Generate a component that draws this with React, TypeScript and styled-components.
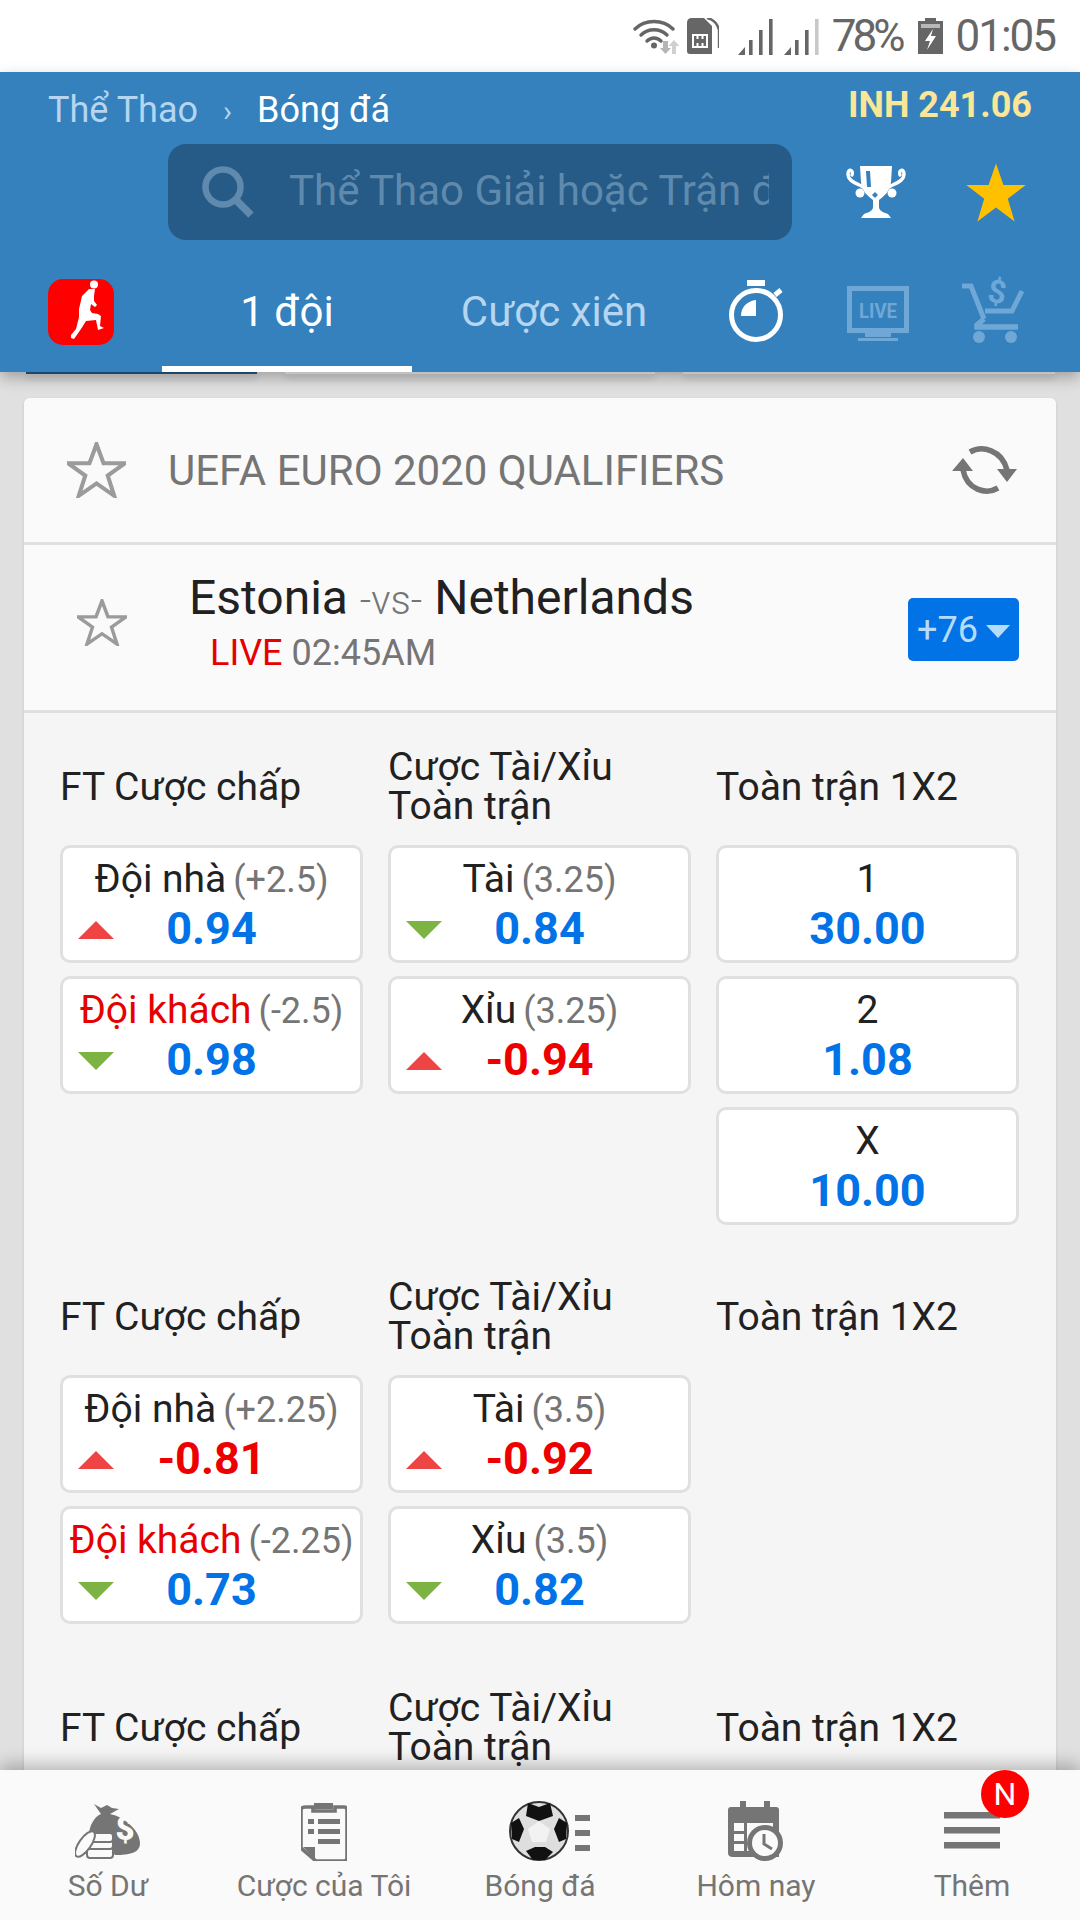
import * as React from "react";
import styled, { createGlobalStyle } from "styled-components";

const GlobalStyles = createGlobalStyle`
  html, body {
    margin: 0;
    padding: 0;
    background: #e0e0e0;
    font-family: Roboto, "Noto Sans", sans-serif;
  }
`;

const Screen = styled.div`
  width: 1080px;
  height: 1920px;
  display: flex;
  flex-direction: column;
  overflow: hidden;
  background: #e0e0e0;
`;

/* status bar */
const StatusBar = styled.div`
  height: 72px;
  flex: none;
  background: #fff;
  display: flex;
  align-items: center;
  justify-content: flex-end;
  padding: 0 25px 0 0;
  color: #666;
  font-size: 44px;
  letter-spacing: -2px;
`;

const StatusIcon = styled.svg<{ $gap?: number }>`
  display: block;
  flex: none;
  margin-right: ${(p) => p.$gap ?? 0}px;
`;

const StatusText = styled.span<{ $gap?: number; $tight?: boolean }>`
  margin-right: ${(p) => p.$gap ?? 0}px;
  line-height: 72px;
  letter-spacing: ${(p) => (p.$tight ? "-4px" : "-2px")};
`;

/* blue header */
const Header = styled.header`
  position: relative;
  z-index: 2;
  flex: none;
  height: 300px;
  background: #3481bd;
  box-shadow: 0 6px 14px rgba(0, 0, 0, 0.28);
`;

const TopRow = styled.div`
  height: 72px;
  display: flex;
  justify-content: space-between;
  padding: 0 48px;
`;

const Crumbs = styled.div`
  display: flex;
  align-items: center;
  font-size: 36px;
  color: #b5d5f0;
  height: 72px;
  padding-top: 4px;
  box-sizing: border-box;
`;

const CrumbSep = styled.span`
  margin: 0 25px;
  font-size: 30px;
`;

const CrumbNow = styled.span`
  color: #fff;
`;

const Balance = styled.div`
  font-size: 36px;
  font-weight: 700;
  color: #fbe596;
  line-height: 66px;
`;

const SearchRow = styled.div`
  display: flex;
  align-items: center;
  height: 96px;
  padding-left: 168px;
`;

const SearchBox = styled.div`
  width: 624px;
  height: 96px;
  box-sizing: border-box;
  background: #255b86;
  border-radius: 18px;
  display: flex;
  align-items: center;
  padding: 0 23px 0 33px;
`;

const Placeholder = styled.div`
  margin-left: 34px;
  flex: 1;
  min-width: 0;
  overflow: hidden;
  white-space: nowrap;
  font-size: 42px;
  line-height: 60px;
  margin-top: -3px;
  color: #5f8aad;
`;

const TopIcon = styled.svg<{ $left: number }>`
  display: block;
  flex: none;
  margin-left: ${(p) => p.$left}px;
`;

const TabRow = styled.div`
  display: flex;
  height: 100px;
  margin-top: 32px;
  align-items: flex-start;
`;

const SportBadge = styled.div`
  flex: none;
  width: 66px;
  height: 66px;
  margin: 7px 48px 0 48px;
  border-radius: 15px;
  background: #f00;
  display: flex;
  align-items: center;
  justify-content: center;
`;

const Tab = styled.div<{ $active?: boolean; $width: number }>`
  flex: none;
  box-sizing: border-box;
  width: ${(p) => p.$width}px;
  height: 100px;
  padding-bottom: 15px;
  display: flex;
  align-items: center;
  justify-content: center;
  font-size: 42px;
  color: ${(p) => (p.$active ? "#fff" : "#b5d5f0")};
  border-bottom: 6px solid ${(p) => (p.$active ? "#fff" : "transparent")};
`;

const TabIcon = styled.svg<{ $left: number; $top: number }>`
  display: block;
  flex: none;
  overflow: visible;
  margin: ${(p) => p.$top}px 0 0 ${(p) => p.$left}px;
`;

/* scrolling content */
const Content = styled.main`
  flex: 1;
  min-height: 0;
  overflow: hidden;
`;

const PeekRow = styled.div`
  display: flex;
  height: 2px;
  padding: 0 24px;
  margin-bottom: 24px;
`;

const Peek = styled.div<{ $color: string; $left: number; $width: number }>`
  flex: none;
  width: ${(p) => p.$width}px;
  margin-left: ${(p) => p.$left}px;
  background: ${(p) => p.$color};
  box-shadow: 0 4px 6px rgba(0, 0, 0, 0.2);
`;

const Card = styled.section`
  margin: 0 24px;
  border-radius: 6px 6px 0 0;
  background: #f5f5f5;
  box-shadow: 0 1px 3px rgba(0, 0, 0, 0.12);
`;

const LeagueRow = styled.div`
  height: 147px;
  box-sizing: border-box;
  background: #fafafa;
  border-radius: 6px 6px 0 0;
  border-bottom: 3px solid #e0e0e0;
  display: flex;
  align-items: center;
  padding: 0 38px 0 43px;
`;

const LeagueName = styled.div`
  flex: 1;
  margin-left: 42px;
  font-size: 42px;
  color: #757575;
`;

const MatchRow = styled.div`
  height: 168px;
  box-sizing: border-box;
  background: #fafafa;
  border-bottom: 3px solid #e0e0e0;
  display: flex;
  align-items: center;
  padding: 0 37px 0 53px;
`;

const MatchInfo = styled.div`
  flex: 1;
  margin-left: 62px;
  margin-top: -10px;
`;

const Teams = styled.div`
  font-size: 48px;
  line-height: 58px;
  color: #212121;
`;

const Versus = styled.span`
  font-size: 40px;
  font-weight: 300;
  color: #757575;
`;

const Kickoff = styled.div`
  margin-left: 21px;
  font-size: 36px;
  line-height: 46px;
  color: #757575;
`;

const LiveTag = styled.span`
  color: #e60000;
`;

const MoreButton = styled.div`
  width: 111px;
  height: 63px;
  margin-top: 4px;
  border-radius: 5px;
  background: #0273e6;
  color: #b5dcfb;
  font-size: 36px;
  display: flex;
  align-items: center;
  justify-content: center;
  gap: 8px;
`;

const Caret = styled.span`
  width: 0;
  height: 0;
  border-left: 12px solid transparent;
  border-right: 12px solid transparent;
  border-top: 13px solid #b5dcfb;
  margin-top: 3px;
`;

const Market = styled.div<{ $top: number }>`
  display: grid;
  grid-template-columns: repeat(3, 303px);
  column-gap: 25px;
  padding: ${(p) => p.$top}px 36px 0;
`;

const Column = styled.div`
  display: flex;
  flex-direction: column;
  gap: 13px;
`;

const ColumnTitle = styled.div`
  height: 78px;
  margin-top: 1px;
  margin-bottom: 6px;
  font-size: 39px;
  line-height: 39px;
  white-space: nowrap;
  color: #212121;
  display: flex;
  align-items: center;
`;

const OddsCell = styled.div`
  position: relative;
  height: 118px;
  box-sizing: border-box;
  background: #fff;
  border: 3px solid #e0e0e0;
  border-radius: 10px;
  text-align: center;
  white-space: nowrap;
`;

const OddsLabel = styled.div<{ $red?: boolean }>`
  margin-top: 6px;
  height: 50px;
  line-height: 50px;
  font-size: 39px;
  color: ${(p) => (p.$red ? "#e60000" : "#212121")};
`;

const Handicap = styled.span`
  margin-left: 7px;
  font-size: 36px;
  color: #757575;
`;

const OddsValue = styled.div<{ $red?: boolean }>`
  height: 50px;
  line-height: 50px;
  font-size: 45px;
  font-weight: 700;
  color: ${(p) => (p.$red ? "#ee0000" : "#0273e6")};
`;

const Arrow = styled.span<{ $up: boolean }>`
  position: absolute;
  left: 15px;
  top: 73px;
  width: 0;
  height: 0;
  border-left: 18px solid transparent;
  border-right: 18px solid transparent;
  ${(p) =>
    p.$up
      ? "border-bottom: 18px solid #ef4444;"
      : "border-top: 18px solid #7cb342;"}
`;

/* bottom navigation */
const BottomNav = styled.nav`
  position: relative;
  z-index: 2;
  flex: none;
  height: 150px;
  display: grid;
  grid-template-columns: repeat(5, 216px);
  background: #fafafa;
  box-shadow: 0 -6px 16px rgba(0, 0, 0, 0.25);
`;

const NavItem = styled.div`
  position: relative;
  display: flex;
  flex-direction: column;
  align-items: center;
  padding-top: 30px;
  font-size: 30px;
  color: #757575;
`;

const NavIcon = styled.div<{ $shift?: number }>`
  height: 62px;
  display: flex;
  align-items: center;
  justify-content: center;
  padding-left: ${(p) => p.$shift ?? 0}px;
`;

const NavLabel = styled.div`
  margin-top: 4px;
  line-height: 40px;
  white-space: nowrap;
`;

const NewBadge = styled.div`
  position: absolute;
  left: 117px;
  top: 0;
  width: 48px;
  height: 48px;
  border-radius: 50%;
  background: #f00;
  color: #fff;
  font-size: 32px;
  line-height: 48px;
  text-align: center;
`;

const StarSvg = styled.svg<{ $lift?: number }>`
  display: block;
  flex: none;
  margin-bottom: ${(p) => p.$lift ?? 0}px;
`;

const STAR = "M50 4 L62 38 L98 38 L69 60 L80 96 L50 74 L20 96 L31 60 L2 38 L38 38 Z";

const WifiIcon = () => (
  <StatusIcon $gap={4} width="50" height="36" viewBox="0 0 50 36">
    <g fill="none" stroke="#666" strokeWidth="3.4" strokeLinecap="round">
      <path d="M2 11 C12 1 30 1 40 11" />
      <path d="M8 17 C15 10 27 10 34 17" />
      <path d="M14 23 C18 19 24 19 28 23" />
    </g>
    <circle cx="21" cy="27.5" r="3" fill="#666" />
    <path d="M30 23 h5 v7 h3 l-5.5 6 l-5.5 -6 h3 Z" fill="#b5b5b5" />
    <path d="M43 36 h-4 v-8 h-3.5 l5.5 -6 l5.5 6 h-3.5 Z" fill="#d0d0d0" />
  </StatusIcon>
);

const SimIcon = () => (
  <StatusIcon $gap={19} width="32" height="36" viewBox="0 0 32 36">
    <path d="M5 0 H17 L25 8 V36 H3 Q0 36 0 33 V5 Q0 0 5 0 Z" fill="#666" />
    <path d="M20 0 C26 1 31 6 32 12 V30" fill="none" stroke="#666" strokeWidth="2.4" />
    <rect x="6" y="17" width="14" height="12" fill="none" stroke="#fff" strokeWidth="2" />
    <path d="M10.5 17 v4 M15.5 17 v4 M10.5 29 v-4 M15.5 29 v-4" stroke="#fff" strokeWidth="2" />
  </StatusIcon>
);

const SignalIcon = ({ gap, last }: { gap: number; last: string }) => (
  <StatusIcon $gap={gap} width="36" height="37" viewBox="0 0 36 37">
    <path d="M0 37 L7 29 V37 Z" fill="#666" />
    <rect x="11" y="22" width="3.6" height="15" fill="#666" />
    <rect x="21" y="12" width="3.6" height="25" fill="#666" />
    <rect x="31" y="1" width="3.6" height="36" fill={last} />
  </StatusIcon>
);

const BatteryIcon = () => (
  <StatusIcon $gap={12} width="25" height="36" viewBox="0 0 25 36">
    <path d="M7 0 H18 V3 H25 V36 H0 V3 H7 Z" fill="#666" />
    <rect x="3" y="6" width="19" height="4" fill="#b8b8b8" />
    <path d="M15 11 L7 23 H12 L9 32 L18 18 H13 Z" fill="#fff" />
  </StatusIcon>
);

const SearchIcon = () => (
  <svg width="54" height="54" viewBox="0 0 54 54" style={{ flex: "none" }}>
    <circle cx="22" cy="22" r="17.5" fill="none" stroke="#5f8aad" strokeWidth="6.5" />
    <path d="M34 34 L50 50" stroke="#5f8aad" strokeWidth="7.5" />
  </svg>
);

const TrophyIcon = () => (
  <TopIcon $left={54} width="60" height="52" viewBox="0 0 60 52">
    <g fill="none" stroke="#fff" strokeWidth="3.4" strokeLinecap="round">
      <path d="M6 9 C8 4 2 2 2 8 C2 15 10 17 17 21" />
      <path d="M54 9 C52 4 58 2 58 8 C58 15 50 17 43 21" />
    </g>
    <circle cx="14" cy="27" r="4.5" fill="#fff" />
    <circle cx="46" cy="27" r="4.5" fill="#fff" />
    <path d="M14 0 H46 L45 16 C44 26 37 31 33 34 V41 C33 45 39 47 42 48 L45 52 H15 L18 48 C21 47 27 45 27 41 V34 C23 31 16 26 15 16 Z" fill="#fff" />
    <path d="M20 5 H24 L25 21 H21 Z" fill="#3481bd" />
    <path d="M26 29 L29 26 L32 29 L29 32 Z" fill="#3481bd" />
  </TopIcon>
);

const GoldStar = () => (
  <TopIcon $left={59} width="62" height="63" viewBox="0 0 100 100" preserveAspectRatio="none">
    <path d={STAR} fill="#ffc000" />
  </TopIcon>
);

const RunnerIcon = () => (
  <svg width="66" height="66" viewBox="0 0 66 66">
    <circle cx="46" cy="5.5" r="4" fill="#fff" />
    <path d="M41 10 L47 10 L46 17 L46 22 L49 26 L47 28 L43 25 L42 31 L44 34 L50 35 L53 37 L52 47 L56 49 L50 51 L48 41 L38 42 L33 50 L26 60 L23 59 L23 56 L28 50 L31 38 L31 30 L34 17 Z" fill="#fff" />
  </svg>
);

const StopwatchIcon = () => (
  <TabIcon $left={33} $top={8} width="56" height="63" viewBox="0 0 56 63">
    <rect x="18" y="0" width="18" height="6" fill="#fff" />
    <circle cx="27" cy="35" r="24.5" fill="none" stroke="#fff" strokeWidth="5" />
    <path d="M46 15 L52 10" stroke="#fff" strokeWidth="5" />
    <path d="M27 20 V36 H12 C12 27 18 21 27 20 Z" fill="#fff" />
  </TabIcon>
);

const LiveIcon = () => (
  <TabIcon $left={62} $top={14} width="62" height="56" viewBox="0 0 62 56">
    <rect x="2.5" y="2.5" width="57" height="42" fill="none" stroke="#6fa8d6" strokeWidth="5" />
    <text x="31" y="32" textAnchor="middle" fontFamily="Roboto, sans-serif" fontWeight="700" fontSize="20" textLength="38" lengthAdjust="spacingAndGlyphs" fill="#6fa8d6">LIVE</text>
    <rect x="18" y="46" width="26" height="5" fill="#6fa8d6" />
    <rect x="11" y="52" width="40" height="3" fill="#6fa8d6" />
  </TabIcon>
);

const CartIcon = () => (
  <TabIcon $left={53} $top={9} width="62" height="62" viewBox="0 0 62 62">
    <path d="M0 5 H9 L22 38 M60 10 L50 30 H23" fill="none" stroke="#6fa8d6" strokeWidth="5" />
    <path d="M22 38 L15 44 V46 H56" fill="none" stroke="#6fa8d6" strokeWidth="5.5" />
    <circle cx="17" cy="56" r="6" fill="#6fa8d6" />
    <circle cx="49" cy="56" r="6" fill="#6fa8d6" />
    <text x="35" y="22" textAnchor="middle" fontFamily="Roboto, sans-serif" fontWeight="700" fontSize="32" fill="#6fa8d6" transform="rotate(8 35 12)">$</text>
  </TabIcon>
);

const OutlineStar = ({ size, lift }: { size: [number, number]; lift?: number }) => (
  <StarSvg $lift={lift} width={size[0]} height={size[1]} viewBox="0 0 100 100" preserveAspectRatio="none">
    <path d={STAR} fill="none" stroke="#9b9b9b" strokeWidth="7" />
  </StarSvg>
);

const RefreshIcon = () => (
  <svg width="66" height="48" viewBox="0 0 66 48" style={{ flex: "none" }}>
    <g fill="none" stroke="#757575" strokeWidth="5.5">
      <path d="M18 6 C30 -1 50 4 55 24" />
      <path d="M46 42 C34 49 15 44 11 24" />
    </g>
    <path d="M45 23 H65 L55 36 Z" fill="#757575" />
    <path d="M0 25 H21 L11 12 Z" fill="#757575" />
  </svg>
);

const MoneyBagIcon = () => (
  <svg width="66" height="56" viewBox="0 0 66 56">
    <path d="M19 1 L26 5 L32 2 L37 5 L44 6 L35 11 C50 14 65 28 65 40 C65 50 55 52 40 52 L14 30 C15 22 19 14 26 11 Z" fill="#757575" />
    <text x="50" y="37" textAnchor="middle" fontFamily="Roboto, sans-serif" fontWeight="900" fontSize="33" fill="#fafafa">$</text>
    <g fill="#fafafa" stroke="#757575" strokeWidth="2">
      <rect x="12" y="44" width="26" height="11" rx="3" />
      <rect x="12" y="36" width="26" height="10" rx="3" />
      <rect x="13" y="30" width="25" height="9" rx="3" />
      <ellipse cx="10" cy="41" rx="6" ry="15" transform="rotate(35 10 41)" />
    </g>
  </svg>
);

const ClipboardIcon = () => (
  <svg width="46" height="60" viewBox="0 0 46 60">
    <path d="M5 6 H12 V10 H34 V6 H43 Q46 6 46 9 V57 Q46 60 43 60 H15 L0 47 V9 Q0 6 5 6 Z" fill="none" stroke="#757575" strokeWidth="3.6" />
    <path d="M13 2 H32 V8 H13 Z" fill="#757575" />
    <path d="M2 46 L14 46 V58 Z" fill="#757575" />
    <g fill="#757575">
      <rect x="7" y="18" width="6" height="5" />
      <rect x="17" y="18" width="22" height="5" />
      <rect x="7" y="28" width="6" height="5" />
      <rect x="17" y="28" width="22" height="5" />
      <rect x="17" y="38" width="22" height="5" />
    </g>
  </svg>
);

const FootballIcon = () => (
  <svg width="82" height="60" viewBox="0 0 82 60">
    <circle cx="30" cy="30" r="29" fill="#dedede" stroke="#333" strokeWidth="2" />
    <path d="M30 20 L41 28 L37 41 L23 41 L19 28 Z" fill="#f2f2f2" />
    <g fill="#111">
      <path d="M19 2 L30 6 L41 2 L44 15 L30 20 L17 15 Z" />
      <path d="M2 22 L10 17 L15 28 L10 41 L3 38 Z" />
      <path d="M58 22 L50 17 L45 28 L50 41 L57 38 Z" />
      <path d="M17 50 L26 46 L36 46 L44 51 L36 59 L24 59 Z" />
    </g>
    <g fill="#757575">
      <rect x="66" y="14" width="15" height="6" />
      <rect x="66" y="29" width="15" height="6" />
      <rect x="66" y="44" width="15" height="6" />
    </g>
  </svg>
);

const CalendarIcon = () => (
  <svg width="56" height="60" viewBox="0 0 56 60">
    <path d="M12 0 H18 V6 H36 V0 H42 V6 H48 Q51 6 51 9 V56 H5 Q0 56 0 52 V9 Q0 6 3 6 H12 Z" fill="#757575" />
    <rect x="6" y="22" width="39" height="28" fill="#fafafa" />
    <g fill="#757575">
      <rect x="16" y="22" width="3" height="28" />
      <rect x="6" y="30" width="10" height="3" />
      <rect x="6" y="40" width="10" height="3" />
    </g>
    <circle cx="37" cy="42" r="18" fill="#757575" />
    <circle cx="37" cy="42" r="13" fill="#fafafa" />
    <path d="M36 33 V43 L44 48" fill="none" stroke="#757575" strokeWidth="3" />
  </svg>
);

const MenuIcon = () => (
  <svg width="56" height="40" viewBox="0 0 56 40">
    <rect width="56" height="6.5" y="1" fill="#757575" />
    <rect width="56" height="6.5" y="16" fill="#757575" />
    <rect width="56" height="6.5" y="31" fill="#757575" />
  </svg>
);

type Odds = {
  label?: string;
  line?: string;
  value: string;
  trend?: "up" | "down";
  redLabel?: boolean;
  redValue?: boolean;
};

type MarketData = {
  top: number;
  handicap: Odds[];
  totals: Odds[];
  oneXTwo: Odds[];
};

const markets: MarketData[] = [
  {
    top: 34,
    handicap: [
      { label: "Đội nhà", line: "(+2.5)", value: "0.94", trend: "up" },
      { label: "Đội khách", line: "(-2.5)", value: "0.98", trend: "down", redLabel: true },
    ],
    totals: [
      { label: "Tài", line: "(3.25)", value: "0.84", trend: "down" },
      { label: "Xỉu", line: "(3.25)", value: "-0.94", trend: "up", redValue: true },
    ],
    oneXTwo: [
      { label: "1", value: "30.00" },
      { label: "2", value: "1.08" },
      { label: "X", value: "10.00" },
    ],
  },
  {
    top: 52,
    handicap: [
      { label: "Đội nhà", line: "(+2.25)", value: "-0.81", trend: "up", redValue: true },
      { label: "Đội khách", line: "(-2.25)", value: "0.73", trend: "down", redLabel: true },
    ],
    totals: [
      { label: "Tài", line: "(3.5)", value: "-0.92", trend: "up", redValue: true },
      { label: "Xỉu", line: "(3.5)", value: "0.82", trend: "down" },
    ],
    oneXTwo: [],
  },
  {
    top: 64,
    handicap: [],
    totals: [],
    oneXTwo: [],
  },
];

const OddsBox = ({ odds }: { odds: Odds }) => (
  <OddsCell>
    <OddsLabel $red={odds.redLabel}>
      {odds.label}
      {odds.line && <Handicap>{odds.line}</Handicap>}
    </OddsLabel>
    <OddsValue $red={odds.redValue}>{odds.value}</OddsValue>
    {odds.trend && <Arrow $up={odds.trend === "up"} />}
  </OddsCell>
);

const MarketBlock = ({ data }: { data: MarketData }) => (
  <Market $top={data.top}>
    <Column>
      <ColumnTitle>FT Cược chấp</ColumnTitle>
      {data.handicap.map((o, i) => (
        <OddsBox key={i} odds={o} />
      ))}
    </Column>
    <Column>
      <ColumnTitle>
        Cược Tài/Xỉu
        <br />
        Toàn trận
      </ColumnTitle>
      {data.totals.map((o, i) => (
        <OddsBox key={i} odds={o} />
      ))}
    </Column>
    <Column>
      <ColumnTitle>Toàn trận 1X2</ColumnTitle>
      {data.oneXTwo.map((o, i) => (
        <OddsBox key={i} odds={o} />
      ))}
    </Column>
  </Market>
);

const App: React.FC = () => {
  return (
    <Screen>
      <GlobalStyles />
      <StatusBar>
        <WifiIcon />
        <SimIcon />
        <SignalIcon gap={10} last="#666" />
        <SignalIcon gap={12} last="#c8c8c8" />
        <StatusText $gap={17} $tight>78%</StatusText>
        <BatteryIcon />
        <StatusText>01:05</StatusText>
      </StatusBar>

      <Header>
        <TopRow>
          <Crumbs>
            Thể Thao
            <CrumbSep>›</CrumbSep>
            <CrumbNow>Bóng đá</CrumbNow>
          </Crumbs>
          <Balance>INH 241.06</Balance>
        </TopRow>
        <SearchRow>
          <SearchBox>
            <SearchIcon />
            <Placeholder>Thể Thao Giải hoặc Trận đấu</Placeholder>
          </SearchBox>
          <TrophyIcon />
          <GoldStar />
        </SearchRow>
        <TabRow>
          <SportBadge>
            <RunnerIcon />
          </SportBadge>
          <Tab $active $width={250}>1 đội</Tab>
          <Tab $width={284}>Cược xiên</Tab>
          <StopwatchIcon />
          <LiveIcon />
          <CartIcon />
        </TabRow>
      </Header>

      <Content>
        <PeekRow>
          <Peek $color="#255b86" $left={2} $width={231} />
          <Peek $color="#f5f5f5" $left={28} $width={370} />
          <Peek $color="#f5f5f5" $left={28} $width={372} />
        </PeekRow>
        <Card>
          <LeagueRow>
            <OutlineStar size={[59, 56]} />
            <LeagueName>UEFA EURO 2020 QUALIFIERS</LeagueName>
            <RefreshIcon />
          </LeagueRow>
          <MatchRow>
            <OutlineStar size={[50, 47]} lift={10} />
            <MatchInfo>
              <Teams>
                Estonia <Versus>-vs-</Versus> Netherlands
              </Teams>
              <Kickoff>
                <LiveTag>LIVE</LiveTag> 02:45AM
              </Kickoff>
            </MatchInfo>
            <MoreButton>
              +76
              <Caret />
            </MoreButton>
          </MatchRow>
          {markets.map((m, i) => (
            <MarketBlock key={i} data={m} />
          ))}
        </Card>
      </Content>

      <BottomNav>
        <NavItem>
          <NavIcon><MoneyBagIcon /></NavIcon>
          <NavLabel>Số Dư</NavLabel>
        </NavItem>
        <NavItem>
          <NavIcon><ClipboardIcon /></NavIcon>
          <NavLabel>Cược của Tôi</NavLabel>
        </NavItem>
        <NavItem>
          <NavIcon $shift={20}><FootballIcon /></NavIcon>
          <NavLabel>Bóng đá</NavLabel>
        </NavItem>
        <NavItem>
          <NavIcon><CalendarIcon /></NavIcon>
          <NavLabel>Hôm nay</NavLabel>
        </NavItem>
        <NavItem>
          <NavIcon><MenuIcon /></NavIcon>
          <NavLabel>Thêm</NavLabel>
          <NewBadge>N</NewBadge>
        </NavItem>
      </BottomNav>
    </Screen>
  );
};

export default App;
